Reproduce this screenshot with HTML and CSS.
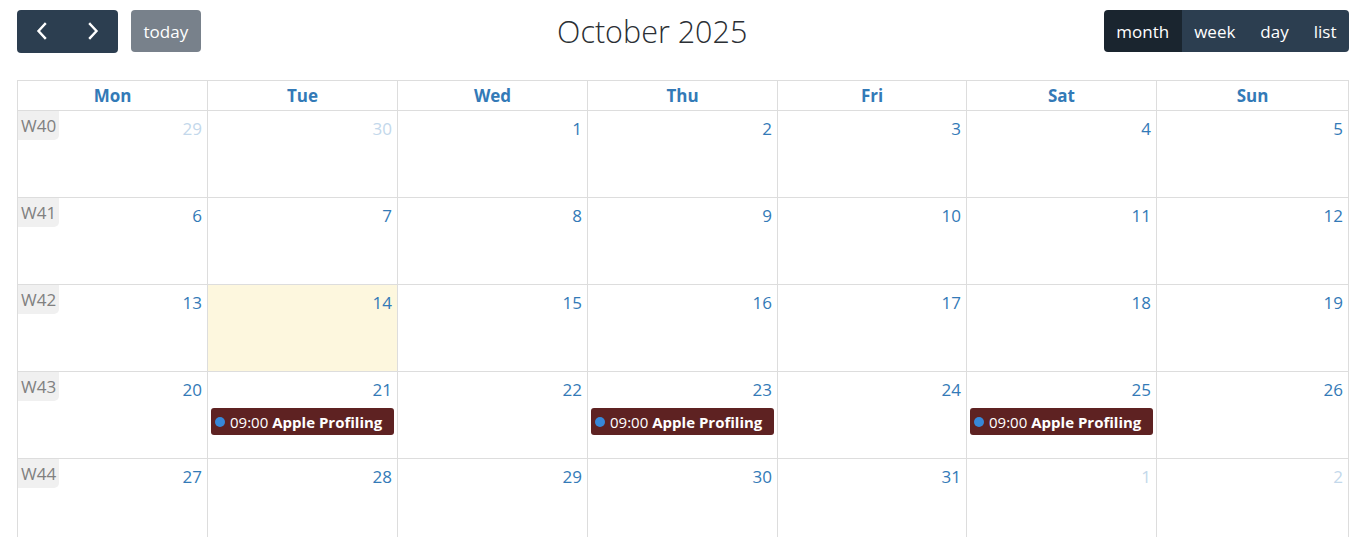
FILE: index.html
```html
<!DOCTYPE html>
<html>
<head>
<meta charset="utf-8">
<link rel="stylesheet" href="styles.css">
</head>
<body>
<div class="cal">
  <div class="toolbar">
    <div class="chunk">
      <div class="btn-group">
        <button class="btn icon-btn" aria-label="prev"><svg width="14" height="18" viewBox="0 0 14 18"><path d="M10 2 L3.5 9 L10 16" fill="none" stroke="#fff" stroke-width="2.4" stroke-linecap="square"/></svg></button>
        <button class="btn icon-btn" aria-label="next"><svg width="14" height="18" viewBox="0 0 14 18"><path d="M4 2 L10.5 9 L4 16" fill="none" stroke="#fff" stroke-width="2.4" stroke-linecap="square"/></svg></button>
      </div>
      <button class="btn btn-disabled">today</button>
    </div>
    <h2 class="title">October 2025</h2>
    <div class="chunk">
      <div class="btn-group">
        <button class="btn btn-active">month</button>
        <button class="btn">week</button>
        <button class="btn">day</button>
        <button class="btn">list</button>
      </div>
    </div>
  </div>

  <div class="grid">
    <div class="head row">
      <div class="hcell">Mon</div><div class="hcell">Tue</div><div class="hcell">Wed</div><div class="hcell">Thu</div><div class="hcell">Fri</div><div class="hcell">Sat</div><div class="hcell">Sun</div>
    </div>

    <div class="week row">
      <div class="day"><span class="wk">W40</span><span class="num other">29</span></div>
      <div class="day"><span class="num other">30</span></div>
      <div class="day"><span class="num">1</span></div>
      <div class="day"><span class="num">2</span></div>
      <div class="day"><span class="num">3</span></div>
      <div class="day"><span class="num">4</span></div>
      <div class="day"><span class="num">5</span></div>
    </div>
    <div class="week row">
      <div class="day"><span class="wk">W41</span><span class="num">6</span></div>
      <div class="day"><span class="num">7</span></div>
      <div class="day"><span class="num">8</span></div>
      <div class="day"><span class="num">9</span></div>
      <div class="day"><span class="num">10</span></div>
      <div class="day"><span class="num">11</span></div>
      <div class="day"><span class="num">12</span></div>
    </div>
    <div class="week row">
      <div class="day"><span class="wk">W42</span><span class="num">13</span></div>
      <div class="day today"><span class="num">14</span></div>
      <div class="day"><span class="num">15</span></div>
      <div class="day"><span class="num">16</span></div>
      <div class="day"><span class="num">17</span></div>
      <div class="day"><span class="num">18</span></div>
      <div class="day"><span class="num">19</span></div>
    </div>
    <div class="week row">
      <div class="day"><span class="wk">W43</span><span class="num">20</span></div>
      <div class="day"><span class="num">21</span><div class="event"><span class="dot"></span><span class="time">09:00</span><span class="etitle">Apple Profiling</span></div></div>
      <div class="day"><span class="num">22</span></div>
      <div class="day"><span class="num">23</span><div class="event"><span class="dot"></span><span class="time">09:00</span><span class="etitle">Apple Profiling</span></div></div>
      <div class="day"><span class="num">24</span></div>
      <div class="day"><span class="num">25</span><div class="event"><span class="dot"></span><span class="time">09:00</span><span class="etitle">Apple Profiling</span></div></div>
      <div class="day"><span class="num">26</span></div>
    </div>
    <div class="week row">
      <div class="day"><span class="wk">W44</span><span class="num">27</span></div>
      <div class="day"><span class="num">28</span></div>
      <div class="day"><span class="num">29</span></div>
      <div class="day"><span class="num">30</span></div>
      <div class="day"><span class="num">31</span></div>
      <div class="day"><span class="num other">1</span></div>
      <div class="day"><span class="num other">2</span></div>
    </div>
  </div>
</div>
</body>
</html>
```

FILE: styles.css
```css
* { box-sizing: border-box; }
html, body { margin: 0; padding: 0; background: #fff; }
body {
  font-family: "Open Sans", "Liberation Sans", sans-serif;
  font-size: 17px;
  color: #212529;
  overflow: hidden;
}
.cal { padding: 9px 15px 0 17px; }

.toolbar {
  display: flex;
  justify-content: space-between;
  align-items: center;
  margin-bottom: 27px;
  height: 44px;
}
.chunk { display: flex; align-items: center; gap: 13px; }
.title {
  margin: 0;
  font-size: 30.5px;
  font-weight: 300;
  color: #2b2f34;
}
.btn-group { display: flex; border-radius: 4px; overflow: hidden; }
.btn {
  font-family: inherit;
  font-size: 17px;
  line-height: 25px;
  padding: 8px 12.5px;
  height: 42px;
  border: 0;
  background: #2c3e50;
  color: #fff;
  border-radius: 0;
  margin: 0;
}
.btn-active { background: #1a252f; }
.btn-disabled { background: #78818b; border-radius: 4px; }
.icon-btn { width: 50.5px; height: 43px; display: flex; align-items: center; justify-content: center; padding: 0; }

.grid {
  border: 1px solid #ddd;
  border-bottom: 0;
}
.row { display: grid; grid-template-columns: 189px 190px 190px 190px 189px 190px 1fr; }
.hcell {
  height: 30px;
  line-height: 29px;
  text-align: center;
  font-weight: 700;
  color: #337ab7;
  border-left: 1px solid #ddd;
  border-bottom: 1px solid #ddd;
}
.hcell:first-child { border-left: 0; }
.day {
  position: relative;
  height: 87px;
  border-left: 1px solid #ddd;
  border-bottom: 1px solid #ddd;
  display: flex;
  flex-direction: column;
  align-items: flex-end;
}
.day:first-child { border-left: 0; }
.today { background: #fdf7de; }
.num {
  padding: 5px 5px 3px;
  line-height: 25px;
  color: #337ab7;
}
.num.other { color: #c3d8eb; }
.wk {
  position: absolute;
  left: 0;
  top: 0;
  background: #f0f0f0;
  color: #808080;
  padding: 2px 3px 2px 3px;
  line-height: 25px;
  border-radius: 0 0 5px 0;
}
.event {
  align-self: stretch;
  margin: 3px 3px 0 3px;
  height: 27px;
  background: #5e2222;
  color: #fff;
  border-radius: 3px;
  display: flex;
  align-items: center;
  font-size: 15px;
  padding-left: 4px;
  white-space: nowrap;
  overflow: hidden;
}
.dot {
  width: 10px;
  height: 10px;
  border-radius: 50%;
  background: #3788d8;
  margin-right: 5px;
}
.time { margin-right: 4px; }
.etitle { font-weight: 700; }
```
